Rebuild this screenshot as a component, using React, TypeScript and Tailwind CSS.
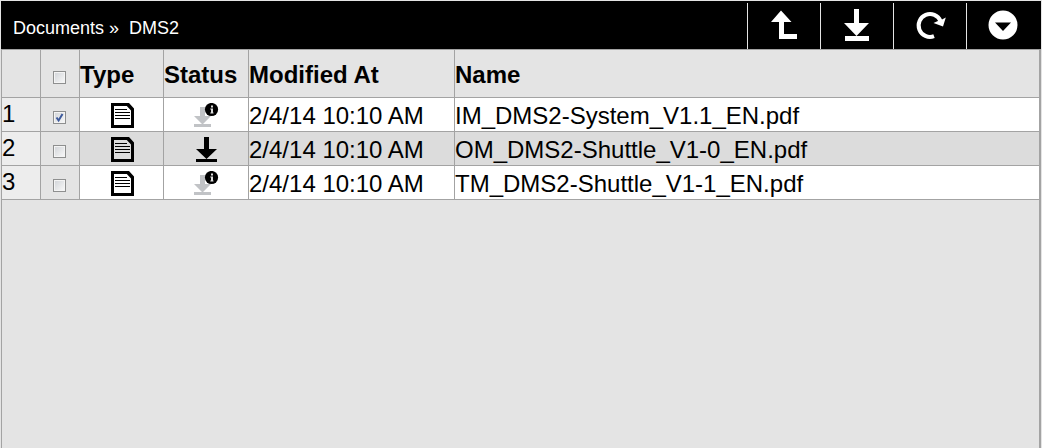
import { useState, type ReactNode } from "react";

type Doc = { id: number; pending: boolean; modified: string; name: string };

const docs: Doc[] = [
  { id: 1, pending: true, modified: "2/4/14 10:10 AM", name: "IM_DMS2-System_V1.1_EN.pdf" },
  { id: 2, pending: false, modified: "2/4/14 10:10 AM", name: "OM_DMS2-Shuttle_V1-0_EN.pdf" },
  { id: 3, pending: true, modified: "2/4/14 10:10 AM", name: "TM_DMS2-Shuttle_V1-1_EN.pdf" },
];

function ToolButton({ label, children }: { label: string; children: ReactNode }) {
  return (
    <button
      type="button"
      aria-label={label}
      className="flex w-[73px] items-center justify-center border-l border-[#e4e4e4] text-white last:w-[75px]"
    >
      <svg width="36" height="36" viewBox="0 0 36 36" fill="currentColor" aria-hidden="true">
        {children}
      </svg>
    </button>
  );
}

function Check({ label, checked, onChange }: { label: string; checked: boolean; onChange: () => void }) {
  return (
    <label className="relative mx-auto block size-[13px]">
      <input
        type="checkbox"
        aria-label={label}
        checked={checked}
        onChange={onChange}
        className="block size-[13px] appearance-none border border-[#8e8f8f] bg-linear-to-br from-[#d0d3d7] to-[#fafafa] shadow-[inset_0_0_0_1px_#f4f4f4]"
      />
      {checked && (
        <svg width="13" height="13" viewBox="0 0 13 13" className="pointer-events-none absolute inset-0" aria-hidden="true">
          <path d="M3.5 6.5 L5.6 9.5 L9.5 3" fill="none" stroke="#3e5a9c" strokeWidth="2" />
        </svg>
      )}
    </label>
  );
}

function DocumentIcon() {
  return (
    <svg width="24" height="26" viewBox="0 0 24 26" className="mx-auto block" role="img" aria-label="Document">
      <path d="M0 0H18L23 5.5V25H0Z M3 3V22H20V7.5L15.8 3Z" fillRule="evenodd" />
      <path d="M4 6.5H16M4 9.5H19M4 12.5H19M4 15.5H19" stroke="#000" strokeWidth="1" />
    </svg>
  );
}

function StatusIcon({ pending }: { pending: boolean }) {
  return pending ? (
    <svg width="26" height="26" viewBox="0 0 26 26" className="mx-auto block" role="img" aria-label="Update available">
      <path d="M7 4H12V13H18L9.5 21.5L1 13H7Z M1 21H18V24H1Z" fill="#c1c3c6" />
      <circle cx="18.5" cy="6.5" r="6.6" />
      <path d="M18 2.5H20V4.5H18Z M17.3 5.5H20V9.5H20.5V10.5H17.3V9.5H18V6.5H17.3Z" fill="#ddd" />
    </svg>
  ) : (
    <svg width="26" height="26" viewBox="0 0 26 26" className="mx-auto block" role="img" aria-label="Downloaded">
      <path d="M11 0H16V12H24L13.5 22L3 12H11Z M3 22H24V25H3Z" />
    </svg>
  );
}

const line = "border-r border-b border-[#a3a3a3]";

export default function App() {
  const [selected, setSelected] = useState<number[]>([1]);
  const toggle = (id: number) =>
    setSelected((ids) => (ids.includes(id) ? ids.filter((i) => i !== id) : [...ids, id]));
  const all = selected.length === docs.length;

  return (
    <div className="flex min-h-screen flex-col bg-[#e4e4e4] px-px pt-px font-['Liberation_Sans',Arial,sans-serif] text-black">
      <header className="flex h-12 justify-between bg-black pt-[2px]">
        <nav aria-label="Breadcrumb" className="flex items-center gap-[10px] pt-1 pl-3 text-[18px] leading-6 text-white">
          <a href="#documents">Documents »</a>
          <a href="#dms2">DMS2</a>
        </nav>
        <div className="flex">
          <ToolButton label="Up one level">
            <path d="M15 2.5L25.5 14H18V26H31V31H13V14H5Z" />
          </ToolButton>
          <ToolButton label="Download">
            <path d="M15 1H20V15H30L17.5 28L5 15H15Z M6 28H30V33H6Z" />
          </ToolButton>
          <ToolButton label="Refresh">
            <path d="M22 28.2A11.4 11.4 0 1 1 28.5 13" fill="none" stroke="currentColor" strokeWidth="4" />
            <path d="M33.8 9.5L31 18.5L21.5 15L27 12.5L30 11.5Z" />
          </ToolButton>
          <ToolButton label="More actions">
            <path d="M17 2.5A14.5 14.5 0 1 1 17 31.5A14.5 14.5 0 1 1 17 2.5Z M9 14.5L17 23L25 14.5Z" fillRule="evenodd" />
          </ToolButton>
        </div>
      </header>
      <main className="flex-1 border-t border-r-2 border-l border-[#a3a3a3]">
        <table className="w-full table-fixed border-separate border-spacing-0 text-left text-[24px] leading-7">
          <colgroup>
            <col className="w-[39px]" />
            <col className="w-[39px]" />
            <col className="w-[84px]" />
            <col className="w-[85px]" />
            <col className="w-[206px]" />
            <col />
          </colgroup>
          <thead>
            <tr className="h-12">
              <td className={line} />
              <td className={`${line} pt-2 pr-[2px]`}>
                <Check label="Select all" checked={all} onChange={() => setSelected(all ? [] : docs.map((d) => d.id))} />
              </td>
              <th scope="col" className={`${line} pt-[2px]`}>Type</th>
              <th scope="col" className={`${line} pt-[2px]`}>Status</th>
              <th scope="col" className={`${line} pt-[2px]`}>Modified At</th>
              <th scope="col" className="border-b border-[#a3a3a3] pt-[2px]">Name</th>
            </tr>
          </thead>
          <tbody>
            {docs.map((d) => (
              <tr key={d.id} className="h-[34px] bg-white even:bg-[#dcdcdc]">
                <td className={`${line} bg-[#ededed] align-top leading-8`}>{d.id}</td>
                <td className={`${line} bg-[#e4e4e4] pt-[6px] pr-[2px]`}>
                  <Check label={`Select ${d.name}`} checked={selected.includes(d.id)} onChange={() => toggle(d.id)} />
                </td>
                <td className={`${line} pt-[3px] pl-[2px]`}><DocumentIcon /></td>
                <td className={`${line} pt-[3px]`}><StatusIcon pending={d.pending} /></td>
                <td className={`${line} pt-[2px] whitespace-nowrap`}>{d.modified}</td>
                <td className="truncate border-b border-[#a3a3a3] pt-[2px]">{d.name}</td>
              </tr>
            ))}
          </tbody>
        </table>
      </main>
    </div>
  );
}
